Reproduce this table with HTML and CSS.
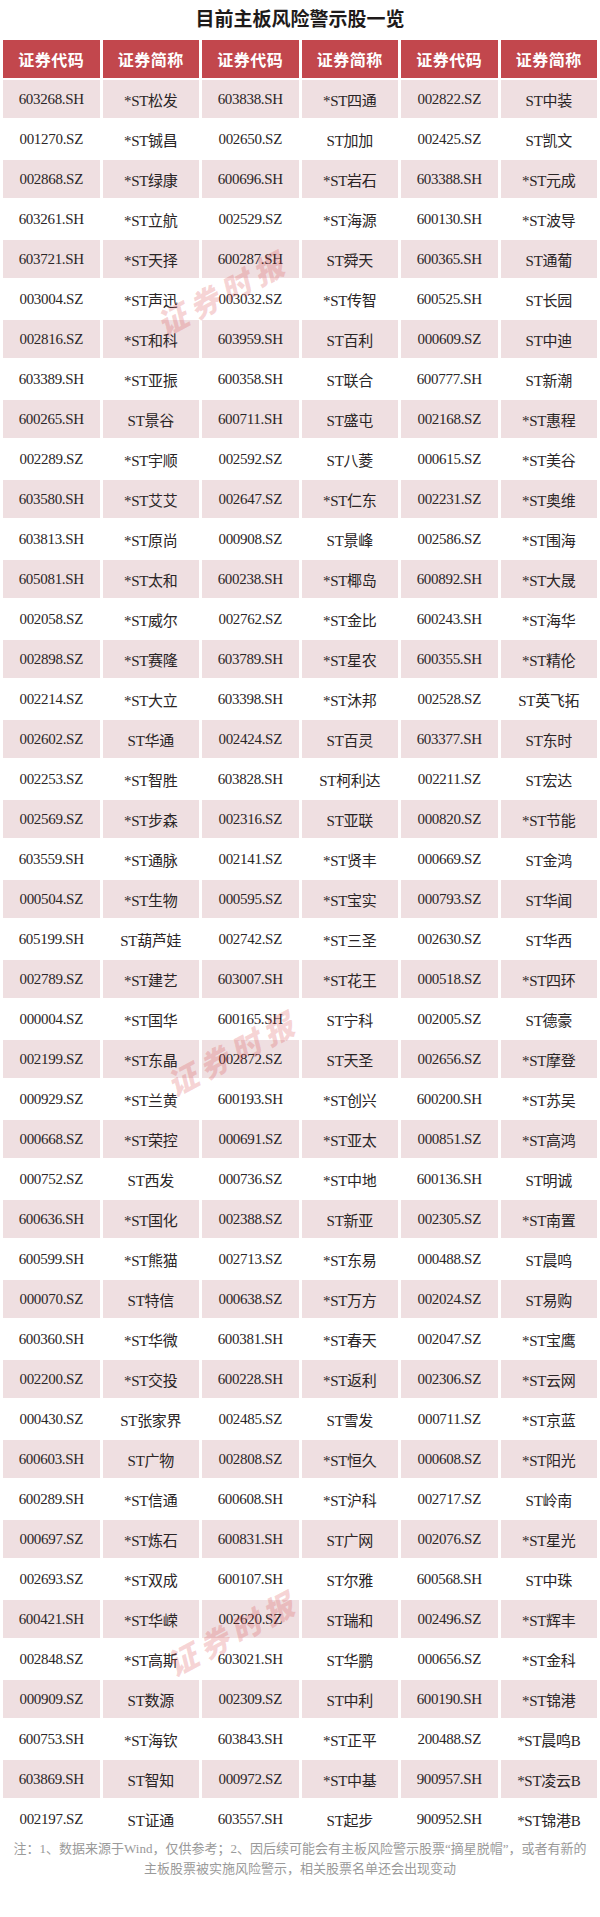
FILE: index.html
```html
<!DOCTYPE html>
<html lang="zh-CN">
<head>
<meta charset="utf-8">
<title>目前主板风险警示股一览</title>
<link rel="stylesheet" href="styles.css">
</head>
<body>
<div class="page">
  <h1 class="title">目前主板风险警示股一览</h1>
  <table class="list">
    <thead>
      <tr><th>证券代码</th><th>证券简称</th><th>证券代码</th><th>证券简称</th><th>证券代码</th><th>证券简称</th></tr>
    </thead>
    <tbody>
      <tr><td>603268.SH</td><td>*ST松发</td><td>603838.SH</td><td>*ST四通</td><td>002822.SZ</td><td>ST中装</td></tr>
      <tr><td>001270.SZ</td><td>*ST铖昌</td><td>002650.SZ</td><td>ST加加</td><td>002425.SZ</td><td>ST凯文</td></tr>
      <tr><td>002868.SZ</td><td>*ST绿康</td><td>600696.SH</td><td>*ST岩石</td><td>603388.SH</td><td>*ST元成</td></tr>
      <tr><td>603261.SH</td><td>*ST立航</td><td>002529.SZ</td><td>*ST海源</td><td>600130.SH</td><td>*ST波导</td></tr>
      <tr><td>603721.SH</td><td>*ST天择</td><td>600287.SH</td><td>ST舜天</td><td>600365.SH</td><td>ST通葡</td></tr>
      <tr><td>003004.SZ</td><td>*ST声迅</td><td>003032.SZ</td><td>*ST传智</td><td>600525.SH</td><td>ST长园</td></tr>
      <tr><td>002816.SZ</td><td>*ST和科</td><td>603959.SH</td><td>ST百利</td><td>000609.SZ</td><td>ST中迪</td></tr>
      <tr><td>603389.SH</td><td>*ST亚振</td><td>600358.SH</td><td>ST联合</td><td>600777.SH</td><td>ST新潮</td></tr>
      <tr><td>600265.SH</td><td>ST景谷</td><td>600711.SH</td><td>ST盛屯</td><td>002168.SZ</td><td>*ST惠程</td></tr>
      <tr><td>002289.SZ</td><td>*ST宇顺</td><td>002592.SZ</td><td>ST八菱</td><td>000615.SZ</td><td>*ST美谷</td></tr>
      <tr><td>603580.SH</td><td>*ST艾艾</td><td>002647.SZ</td><td>*ST仁东</td><td>002231.SZ</td><td>*ST奥维</td></tr>
      <tr><td>603813.SH</td><td>*ST原尚</td><td>000908.SZ</td><td>ST景峰</td><td>002586.SZ</td><td>*ST围海</td></tr>
      <tr><td>605081.SH</td><td>*ST太和</td><td>600238.SH</td><td>*ST椰岛</td><td>600892.SH</td><td>*ST大晟</td></tr>
      <tr><td>002058.SZ</td><td>*ST威尔</td><td>002762.SZ</td><td>*ST金比</td><td>600243.SH</td><td>*ST海华</td></tr>
      <tr><td>002898.SZ</td><td>*ST赛隆</td><td>603789.SH</td><td>*ST星农</td><td>600355.SH</td><td>*ST精伦</td></tr>
      <tr><td>002214.SZ</td><td>*ST大立</td><td>603398.SH</td><td>*ST沐邦</td><td>002528.SZ</td><td>ST英飞拓</td></tr>
      <tr><td>002602.SZ</td><td>ST华通</td><td>002424.SZ</td><td>ST百灵</td><td>603377.SH</td><td>ST东时</td></tr>
      <tr><td>002253.SZ</td><td>*ST智胜</td><td>603828.SH</td><td>ST柯利达</td><td>002211.SZ</td><td>ST宏达</td></tr>
      <tr><td>002569.SZ</td><td>*ST步森</td><td>002316.SZ</td><td>ST亚联</td><td>000820.SZ</td><td>*ST节能</td></tr>
      <tr><td>603559.SH</td><td>*ST通脉</td><td>002141.SZ</td><td>*ST贤丰</td><td>000669.SZ</td><td>ST金鸿</td></tr>
      <tr><td>000504.SZ</td><td>*ST生物</td><td>000595.SZ</td><td>*ST宝实</td><td>000793.SZ</td><td>ST华闻</td></tr>
      <tr><td>605199.SH</td><td>ST葫芦娃</td><td>002742.SZ</td><td>*ST三圣</td><td>002630.SZ</td><td>ST华西</td></tr>
      <tr><td>002789.SZ</td><td>*ST建艺</td><td>603007.SH</td><td>*ST花王</td><td>000518.SZ</td><td>*ST四环</td></tr>
      <tr><td>000004.SZ</td><td>*ST国华</td><td>600165.SH</td><td>ST宁科</td><td>002005.SZ</td><td>ST德豪</td></tr>
      <tr><td>002199.SZ</td><td>*ST东晶</td><td>002872.SZ</td><td>ST天圣</td><td>002656.SZ</td><td>*ST摩登</td></tr>
      <tr><td>000929.SZ</td><td>*ST兰黄</td><td>600193.SH</td><td>*ST创兴</td><td>600200.SH</td><td>*ST苏吴</td></tr>
      <tr><td>000668.SZ</td><td>*ST荣控</td><td>000691.SZ</td><td>*ST亚太</td><td>000851.SZ</td><td>*ST高鸿</td></tr>
      <tr><td>000752.SZ</td><td>ST西发</td><td>000736.SZ</td><td>*ST中地</td><td>600136.SH</td><td>ST明诚</td></tr>
      <tr><td>600636.SH</td><td>*ST国化</td><td>002388.SZ</td><td>ST新亚</td><td>002305.SZ</td><td>*ST南置</td></tr>
      <tr><td>600599.SH</td><td>*ST熊猫</td><td>002713.SZ</td><td>*ST东易</td><td>000488.SZ</td><td>ST晨鸣</td></tr>
      <tr><td>000070.SZ</td><td>ST特信</td><td>000638.SZ</td><td>*ST万方</td><td>002024.SZ</td><td>ST易购</td></tr>
      <tr><td>600360.SH</td><td>*ST华微</td><td>600381.SH</td><td>*ST春天</td><td>002047.SZ</td><td>*ST宝鹰</td></tr>
      <tr><td>002200.SZ</td><td>*ST交投</td><td>600228.SH</td><td>*ST返利</td><td>002306.SZ</td><td>*ST云网</td></tr>
      <tr><td>000430.SZ</td><td>ST张家界</td><td>002485.SZ</td><td>ST雪发</td><td>000711.SZ</td><td>*ST京蓝</td></tr>
      <tr><td>600603.SH</td><td>ST广物</td><td>002808.SZ</td><td>*ST恒久</td><td>000608.SZ</td><td>*ST阳光</td></tr>
      <tr><td>600289.SH</td><td>*ST信通</td><td>600608.SH</td><td>*ST沪科</td><td>002717.SZ</td><td>ST岭南</td></tr>
      <tr><td>000697.SZ</td><td>*ST炼石</td><td>600831.SH</td><td>ST广网</td><td>002076.SZ</td><td>*ST星光</td></tr>
      <tr><td>002693.SZ</td><td>*ST双成</td><td>600107.SH</td><td>ST尔雅</td><td>600568.SH</td><td>ST中珠</td></tr>
      <tr><td>600421.SH</td><td>*ST华嵘</td><td>002620.SZ</td><td>ST瑞和</td><td>002496.SZ</td><td>*ST辉丰</td></tr>
      <tr><td>002848.SZ</td><td>*ST高斯</td><td>603021.SH</td><td>ST华鹏</td><td>000656.SZ</td><td>*ST金科</td></tr>
      <tr><td>000909.SZ</td><td>ST数源</td><td>002309.SZ</td><td>ST中利</td><td>600190.SH</td><td>*ST锦港</td></tr>
      <tr><td>600753.SH</td><td>*ST海钦</td><td>603843.SH</td><td>*ST正平</td><td>200488.SZ</td><td>*ST晨鸣B</td></tr>
      <tr><td>603869.SH</td><td>ST智知</td><td>000972.SZ</td><td>*ST中基</td><td>900957.SH</td><td>*ST凌云B</td></tr>
      <tr><td>002197.SZ</td><td>ST证通</td><td>603557.SH</td><td>ST起步</td><td>900952.SH</td><td>*ST锦港B</td></tr>
    </tbody>
  </table>
  <p class="note">注：1、数据来源于Wind，仅供参考；2、因后续可能会有主板风险警示股票“摘星脱帽”，或者有新的<br>主板股票被实施风险警示，相关股票名单还会出现变动</p>
  <div class="mark mark-1">证券时报</div>
  <div class="mark mark-2">证券时报</div>
  <div class="mark mark-3">证券时报</div>
</div>
</body>
</html>
```
FILE: styles.css
```css
html, body {
  margin: 0;
  padding: 0;
  background: #ffffff;
}

.page {
  position: relative;
  width: 600px;
  min-height: 1917px;
  overflow: hidden;
  font-family: "Liberation Serif", "Noto Sans CJK SC", serif;
  color: #2a2526;
}

.title {
  margin: 0;
  height: 38px;
  line-height: 40px;
  text-align: center;
  font-size: 19px;
  font-weight: bold;
  color: #1e1a1a;
  font-family: "Liberation Serif", "Noto Sans CJK SC", serif;
}

.list {
  width: 600px;
  table-layout: fixed;
  border-collapse: separate;
  border-spacing: 3px 2px;
  margin: 0;
}

.list th,
.list td {
  height: 38px;
  padding: 0;
  text-align: center;
  vertical-align: middle;
  white-space: nowrap;
}

.list th {
  background: #c2474d;
  color: #ffffff;
  font-size: 16px;
  font-weight: bold;
  letter-spacing: 0.5px;
}

.list td {
  font-size: 15px;
  letter-spacing: -0.3px;
}

.list tbody tr:nth-child(odd) td {
  background: #efdfe1;
}

.note {
  margin: -1px 0 0;
  text-align: center;
  font-size: 13px;
  line-height: 20px;
  color: #9a9a9a;
}

.mark {
  position: absolute;
  font-family: "Noto Sans CJK SC", sans-serif;
  font-weight: 900;
  font-style: italic;
  font-size: 30px;
  letter-spacing: 6px;
  color: rgba(214, 60, 64, 0.22);
  transform: rotate(-28deg);
  pointer-events: none;
  white-space: nowrap;
}

.mark-1 { left: 150px; top: 270px; }
.mark-2 { left: 160px; top: 1030px; }
.mark-3 { left: 160px; top: 1610px; }
```
